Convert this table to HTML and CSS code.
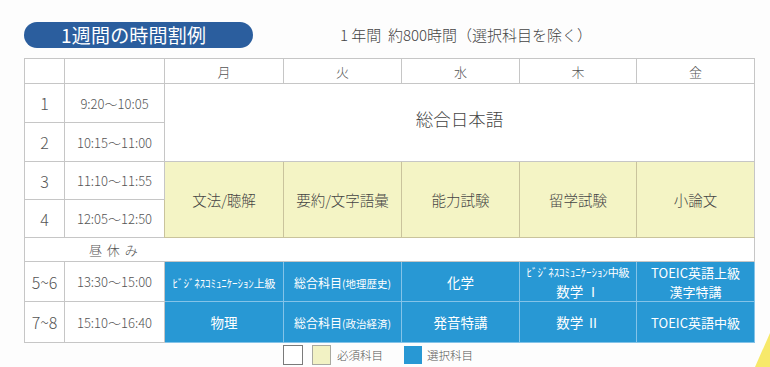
FILE: index.html
```html
<!DOCTYPE html>
<html lang="ja">
<head>
<meta charset="utf-8">
<title>1週間の時間割例</title>
<link rel="stylesheet" href="styles.css">
</head>
<body>
<div class="page">
  <div class="heading">
    <div class="pill">1週間の時間割例</div>
    <div class="subtitle">1 年間&nbsp;&nbsp;約800時間（選択科目を除く）</div>
  </div>
  <table class="tt">
    <colgroup>
      <col class="c-no"><col class="c-time"><col class="c-d1"><col class="c-d2"><col class="c-d3"><col class="c-d4"><col class="c-d5">
    </colgroup>
    <tr class="r-head">
      <td></td><td></td><td class="day">月</td><td class="day">火</td><td class="day">水</td><td class="day">木</td><td class="day">金</td>
    </tr>
    <tr class="r-p1">
      <td class="no">1</td><td class="time">9:20～10:05</td>
      <td class="general" colspan="5" rowspan="2"><span class="general-txt">総合日本語</span></td>
    </tr>
    <tr class="r-p2">
      <td class="no">2</td><td class="time">10:15～11:00</td>
    </tr>
    <tr class="r-p3">
      <td class="no">3</td><td class="time">11:10～11:55</td>
      <td class="req" rowspan="2">文法/聴解</td>
      <td class="req" rowspan="2">要約/文字語彙</td>
      <td class="req" rowspan="2">能力試験</td>
      <td class="req" rowspan="2">留学試験</td>
      <td class="req last" rowspan="2">小論文</td>
    </tr>
    <tr class="r-p4">
      <td class="no">4</td><td class="time">12:05～12:50</td>
    </tr>
    <tr class="r-lunch">
      <td class="lunch" colspan="7">昼 休 み</td>
    </tr>
    <tr class="r-p5">
      <td class="no">5~6</td><td class="time">13:30～15:00</td>
      <td class="opt"><span class="biz">ﾋﾞｼﾞﾈｽｺﾐｭﾆｹｰｼｮﾝ上級</span></td>
      <td class="opt"><span class="sm">総合科目</span><span class="xs">(地理歴史)</span></td>
      <td class="opt">化学</td>
      <td class="opt two"><span class="biz">ﾋﾞｼﾞﾈｽｺﾐｭﾆｹｰｼｮﾝ中級</span><br>数学 Ⅰ</td>
      <td class="opt two toeic">TOEIC英語上級<br>漢字特講</td>
    </tr>
    <tr class="r-p7">
      <td class="no">7~8</td><td class="time">15:10～16:40</td>
      <td class="opt">物理</td>
      <td class="opt"><span class="sm">総合科目</span><span class="xs">(政治経済)</span></td>
      <td class="opt">発音特講</td>
      <td class="opt">数学 Ⅱ</td>
      <td class="opt toeic">TOEIC英語中級</td>
    </tr>
  </table>
  <div class="legend">
    <span class="box box-white"></span>
    <span class="box box-yellow"></span>
    <span class="legend-label">必須科目</span>
    <span class="box box-blue"></span>
    <span class="legend-label">選択科目</span>
  </div>
  <svg class="deco" width="20" height="34" viewBox="0 0 20 34"><polygon points="20,0 20,34 5,34" fill="#f7e96a"/></svg>
</div>
</body>
</html>
```
FILE: styles.css
```css
* { box-sizing: border-box; }
html, body { margin: 0; padding: 0; }
body {
  width: 770px;
  height: 367px;
  overflow: hidden;
  background: #fdfdfd;
  font-family: "Noto Sans CJK JP", "Noto Sans", sans-serif;
  font-weight: 300;
  color: #444;
}
.page {
  position: relative;
  width: 770px;
  height: 367px;
  padding: 22px 0 0 24px;
}
.heading {
  display: flex;
  align-items: center;
  height: 26px;
}
.pill {
  width: 229px;
  height: 26px;
  border-radius: 13px;
  background: #2b5e9e;
  color: #fff;
  font-size: 19px;
  font-weight: 400;
  line-height: 26px;
  padding-left: 37px;
  letter-spacing: 0.2px;
}
.subtitle {
  margin-left: 87px;
  font-size: 15px;
  color: #444;
  line-height: 26px;
}
.tt {
  margin-top: 10px;
  border-collapse: collapse;
  table-layout: fixed;
  width: 731px;
}
.c-no { width: 40px; }
.c-time { width: 100px; }
.c-d1 { width: 119px; }
.c-d2 { width: 118px; }
.c-d3 { width: 118px; }
.c-d4 { width: 117px; }
.c-d5 { width: 118px; }
.tt td {
  border: 1px solid #c6c6c6;
  padding: 0;
  text-align: center;
  vertical-align: middle;
  background: #fff;
}
.r-head { height: 25px; }
.r-p1, .r-p2 { height: 39px; }
.r-p3, .r-p4 { height: 38px; }
.r-lunch { height: 24px; }
.r-p5 { height: 39px; }
.r-p7 { height: 41px; }
.day { font-size: 13px; color: #555; }
.no { font-size: 16px; color: #555; }
.time { font-size: 13px; color: #555; }
.general { font-size: 17.5px; color: #444; }
.general-txt { position: relative; top: -4px; }
.tt td.req {
  background: #f4f4c5;
  border-color: #c9c39c;
  border-top-color: #c6c6c6;
  font-size: 14.5px;
  color: #444;
}
.tt td.req.last { border-right-color: #c6c6c6; }
.tt td.lunch {
  text-align: left;
  padding-left: 64px;
  font-size: 13px;
  color: #555;
  letter-spacing: 1px;
}
.tt td.opt {
  background: #2898d4;
  border-color: #84c3e8;
  color: #fff;
  font-size: 13.5px;
  font-weight: 400;
}
.tt td.opt.two { line-height: 19px; }
.tt td.toeic { font-size: 13px; }
.biz { font-size: 11px; letter-spacing: -0.1px; }
.sm { font-size: 12px; }
.xs { font-size: 10.5px; }
.legend {
  display: flex;
  align-items: center;
  margin-top: 2px;
  margin-left: 259px;
  height: 20px;
}
.box { display: block; width: 20px; height: 20px; }
.box-white { border: 1px solid #7a7a7a; background: #fff; }
.box-yellow { margin-left: 9px; border: 1px solid #a9a9a0; background: #f2f2c4; width: 19px; }
.box-blue { margin-left: 21px; background: #2898d4; width: 18px; height: 18px; }
.legend-label { margin-left: 6px; font-size: 11.5px; color: #555; }
.box-blue + .legend-label { margin-left: 5px; }
.deco { position: absolute; right: 0; bottom: 0; }
```
